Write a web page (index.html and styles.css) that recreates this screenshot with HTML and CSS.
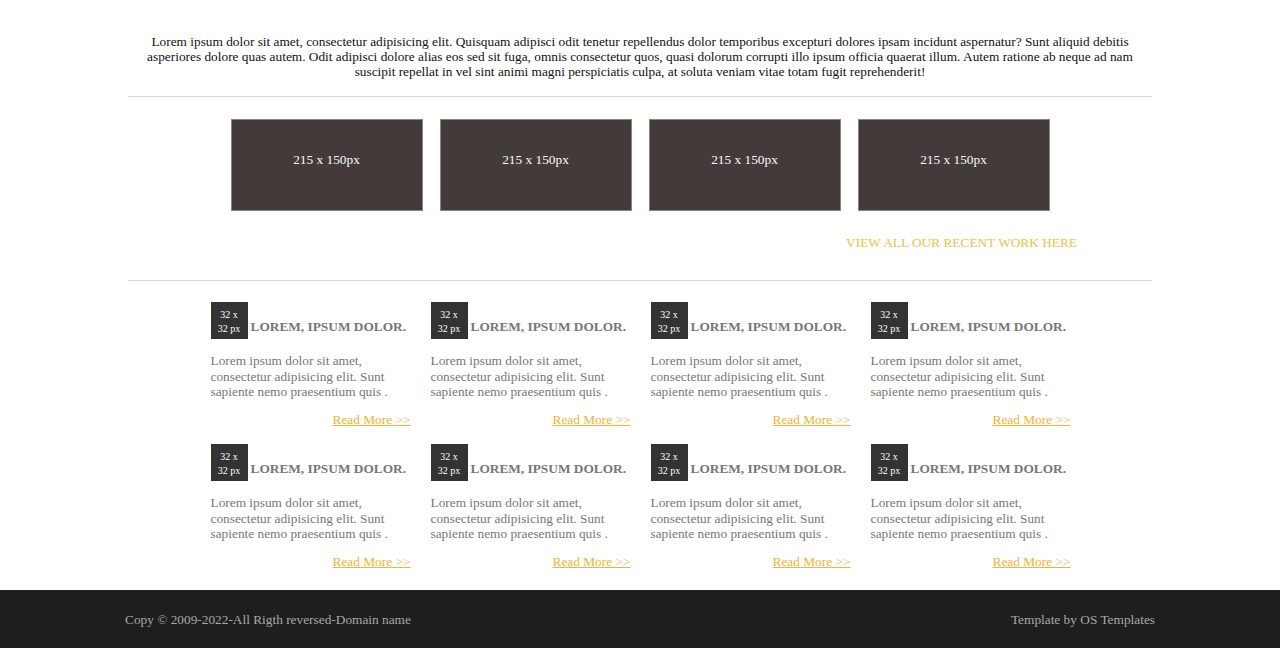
FILE: index.html
```html
<!DOCTYPE html>
<html>
<head>
<meta charset="utf-8">
<link rel="stylesheet" href="styles.css">
</head>
<body>
<main class="wrap">
  <section class="intro">
    <p>Lorem ipsum dolor sit amet, consectetur adipisicing elit. Quisquam adipisci odit tenetur repellendus dolor temporibus excepturi dolores ipsam incidunt aspernatur? Sunt aliquid debitis asperiores dolore quas autem. Odit adipisci dolore alias eos sed sit fuga, omnis consectetur quos, quasi dolorum corrupti illo ipsum officia quaerat illum. Autem ratione ab neque ad nam suscipit repellat in vel sint animi magni perspiciatis culpa, at soluta veniam vitae totam fugit reprehenderit!</p>
  </section>
  <hr class="rule">
  <section class="gallery">
    <div class="thumbs">
      <div class="thumb">215 x 150px</div>
      <div class="thumb">215 x 150px</div>
      <div class="thumb">215 x 150px</div>
      <div class="thumb">215 x 150px</div>
    </div>
    <div class="more-row"><a class="view-all" href="#">VIEW ALL OUR RECENT WORK HERE</a></div>
  </section>
  <hr class="rule">
  <section class="features">
    <article class="feature">
      <h3><span class="ico">32 x<br>32 px</span><span class="title">LOREM, IPSUM DOLOR.</span></h3>
      <p>Lorem ipsum dolor sit amet, consectetur adipisicing elit. Sunt sapiente nemo praesentium quis .</p>
      <div class="rm"><a href="#">Read More &gt;&gt;</a></div>
    </article>
    <article class="feature">
      <h3><span class="ico">32 x<br>32 px</span><span class="title">LOREM, IPSUM DOLOR.</span></h3>
      <p>Lorem ipsum dolor sit amet, consectetur adipisicing elit. Sunt sapiente nemo praesentium quis .</p>
      <div class="rm"><a href="#">Read More &gt;&gt;</a></div>
    </article>
    <article class="feature">
      <h3><span class="ico">32 x<br>32 px</span><span class="title">LOREM, IPSUM DOLOR.</span></h3>
      <p>Lorem ipsum dolor sit amet, consectetur adipisicing elit. Sunt sapiente nemo praesentium quis .</p>
      <div class="rm"><a href="#">Read More &gt;&gt;</a></div>
    </article>
    <article class="feature">
      <h3><span class="ico">32 x<br>32 px</span><span class="title">LOREM, IPSUM DOLOR.</span></h3>
      <p>Lorem ipsum dolor sit amet, consectetur adipisicing elit. Sunt sapiente nemo praesentium quis .</p>
      <div class="rm"><a href="#">Read More &gt;&gt;</a></div>
    </article>
    <article class="feature">
      <h3><span class="ico">32 x<br>32 px</span><span class="title">LOREM, IPSUM DOLOR.</span></h3>
      <p>Lorem ipsum dolor sit amet, consectetur adipisicing elit. Sunt sapiente nemo praesentium quis .</p>
      <div class="rm"><a href="#">Read More &gt;&gt;</a></div>
    </article>
    <article class="feature">
      <h3><span class="ico">32 x<br>32 px</span><span class="title">LOREM, IPSUM DOLOR.</span></h3>
      <p>Lorem ipsum dolor sit amet, consectetur adipisicing elit. Sunt sapiente nemo praesentium quis .</p>
      <div class="rm"><a href="#">Read More &gt;&gt;</a></div>
    </article>
    <article class="feature">
      <h3><span class="ico">32 x<br>32 px</span><span class="title">LOREM, IPSUM DOLOR.</span></h3>
      <p>Lorem ipsum dolor sit amet, consectetur adipisicing elit. Sunt sapiente nemo praesentium quis .</p>
      <div class="rm"><a href="#">Read More &gt;&gt;</a></div>
    </article>
    <article class="feature">
      <h3><span class="ico">32 x<br>32 px</span><span class="title">LOREM, IPSUM DOLOR.</span></h3>
      <p>Lorem ipsum dolor sit amet, consectetur adipisicing elit. Sunt sapiente nemo praesentium quis .</p>
      <div class="rm"><a href="#">Read More &gt;&gt;</a></div>
    </article>
  </section>
</main>
<footer class="footer">
  <div class="footer-inner">
    <span>Copy &copy; 2009-2022-All Rigth reversed-Domain name</span>
    <span>Template by OS Templates</span>
  </div>
</footer>
</body>
</html>
```

FILE: styles.css
```css
html, body {
  margin: 0;
  padding: 0;
  background: #fff;
}
body {
  font-family: "Liberation Serif", "Times New Roman", serif;
  color: #222;
}
.wrap {
  width: 1024px;
  margin: 0 auto;
}
.intro {
  padding: 34px 8px 0;
}
.intro p {
  margin: 0;
  font-size: 13.33px;
  line-height: 15px;
  text-align: center;
  color: #111;
}
.rule {
  border: 0;
  border-top: 1px solid #d6d6d6;
  margin: 17px 0 0;
  height: 0;
}
.gallery {
  padding-top: 22px;
}
.thumbs {
  display: flex;
  justify-content: center;
  gap: 17px;
}
.thumb {
  box-sizing: border-box;
  width: 192px;
  height: 92px;
  background: #433a3a;
  border: 1px solid #8a8484;
  color: #fafafa;
  font-size: 13.33px;
  text-align: center;
  padding-top: 32px;
}
.more-row {
  display: flex;
  justify-content: flex-end;
  padding: 24px 75px 0 0;
  height: 45px;
}
.view-all {
  color: #f2bd4a;
  text-decoration: none;
  font-size: 13.33px;
}
.gallery + .rule {
  margin-top: 0;
}
.features {
  display: grid;
  grid-template-columns: repeat(4, 200px);
  column-gap: 20px;
  justify-content: center;
  padding: 21px 0 4px;
  margin-left: 1px;
}
.feature {
  height: 142px;
}
.feature h3 {
  margin: 0;
  display: flex;
  align-items: flex-end;
  font-size: 13.33px;
  font-weight: bold;
  color: #777;
}
.ico {
  display: block;
  flex: none;
  width: 37px;
  height: 37px;
  background: #333;
  color: #fff;
  font-size: 10px;
  font-weight: normal;
  line-height: 14px;
  text-align: center;
  padding-top: 6px;
  box-sizing: border-box;
}
.title {
  line-height: 14px;
  margin: 0 0 5px 3px;
  white-space: nowrap;
}
.feature p {
  margin: 14px 0 0;
  font-size: 13.33px;
  line-height: 15.5px;
  color: #777;
}
.rm {
  text-align: right;
  margin-top: 12px;
  font-size: 13.33px;
}
.rm a {
  color: #f0b23a;
}
.footer {
  background: #1f1e1e;
  height: 58px;
}
.footer-inner {
  width: 1030px;
  margin: 0 auto;
  display: flex;
  justify-content: space-between;
  align-items: center;
  height: 58px;
  padding-top: 1px;
  box-sizing: border-box;
  color: #a8a8a8;
  font-size: 13.33px;
}
```
